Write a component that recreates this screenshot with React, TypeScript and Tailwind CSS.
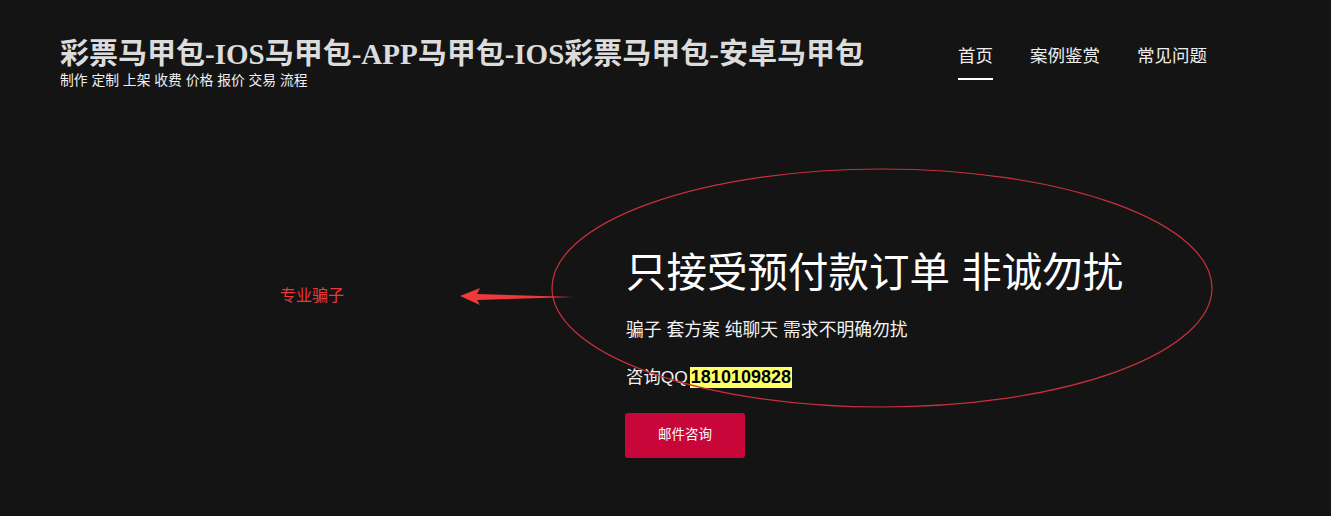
import React from "react";

const cjk = '"Liberation Sans", "Noto Sans CJK SC", sans-serif';
const serifCjk = '"Liberation Serif", "Noto Sans CJK SC", serif';

function NavLink({ label, active }: { label: string; active?: boolean }) {
  return (
    <a href="#" className="flex flex-col items-stretch text-[17.5px] leading-none text-[#eeeeee]">
      <span>{label}</span>
      <span className={active ? "mt-[12px] h-[2px] bg-white" : "mt-[12px] h-[2px] bg-transparent"} />
    </a>
  );
}

// Hand-drawn red markup laid over the hero: ring around the offer and an arrow to the label.
function Markup() {
  return (
    <svg className="pointer-events-none absolute left-0 top-0" width="1331" height="516" viewBox="0 0 1331 516">
      <ellipse cx="882" cy="288" rx="330" ry="119" fill="none" stroke="#c9303c" strokeWidth="1.2" />
      <polygon points="460,296 480,288 477,294 574,297 477,300 480,305" fill="#f03a3a" />
    </svg>
  );
}

export default function App() {
  return (
    <div className="relative min-h-[516px] w-full overflow-hidden bg-[#141414]" style={{ fontFamily: cjk }}>
      <header className="flex items-start justify-between pl-[60px] pr-[124px] pt-[40px]">
        <div>
          <h1 className="text-[29px] font-bold leading-none text-[#dcdcdc]" style={{ fontFamily: serifCjk }}>
            彩票马甲包-IOS马甲包-APP马甲包-IOS彩票马甲包-安卓马甲包
          </h1>
          <p className="mt-[5px] text-[13.8px] leading-none text-[#f0f0f0]">制作 定制 上架 收费 价格 报价 交易 流程</p>
        </div>
        <nav className="flex gap-[37px] pt-[8px]">
          <NavLink label="首页" active />
          <NavLink label="案例鉴赏" />
          <NavLink label="常见问题" />
        </nav>
      </header>

      <section className="flex pt-[165px]">
        <div className="w-[625px] pl-[280px] pt-[31px]">
          <span className="text-[16px] leading-none text-[#e8383b]">专业骗子</span>
        </div>
        <div className="flex flex-col items-start pl-[1px]">
          <h2 className="text-[40.5px] font-normal leading-none text-white">只接受预付款订单 非诚勿扰</h2>
          <p className="mt-[29px] text-[17.8px] leading-none text-[#f2f2f2]">骗子 套方案 纯聊天 需求不明确勿扰</p>
          <p className="mt-[27px] flex items-center text-[17.4px] leading-none text-[#f2f2f2]">
            咨询QQ
            <span className="ml-[2px] bg-[#ffff66] px-[1px] py-[1px] text-[18px] font-bold leading-[19px] text-black">1810109828</span>
          </p>
          <button className="-ml-[1px] mt-[25px] h-[45px] w-[120px] rounded-[3px] bg-[#c8063a] text-[13.5px] text-white">
            邮件咨询
          </button>
        </div>
      </section>

      <Markup />
    </div>
  );
}
